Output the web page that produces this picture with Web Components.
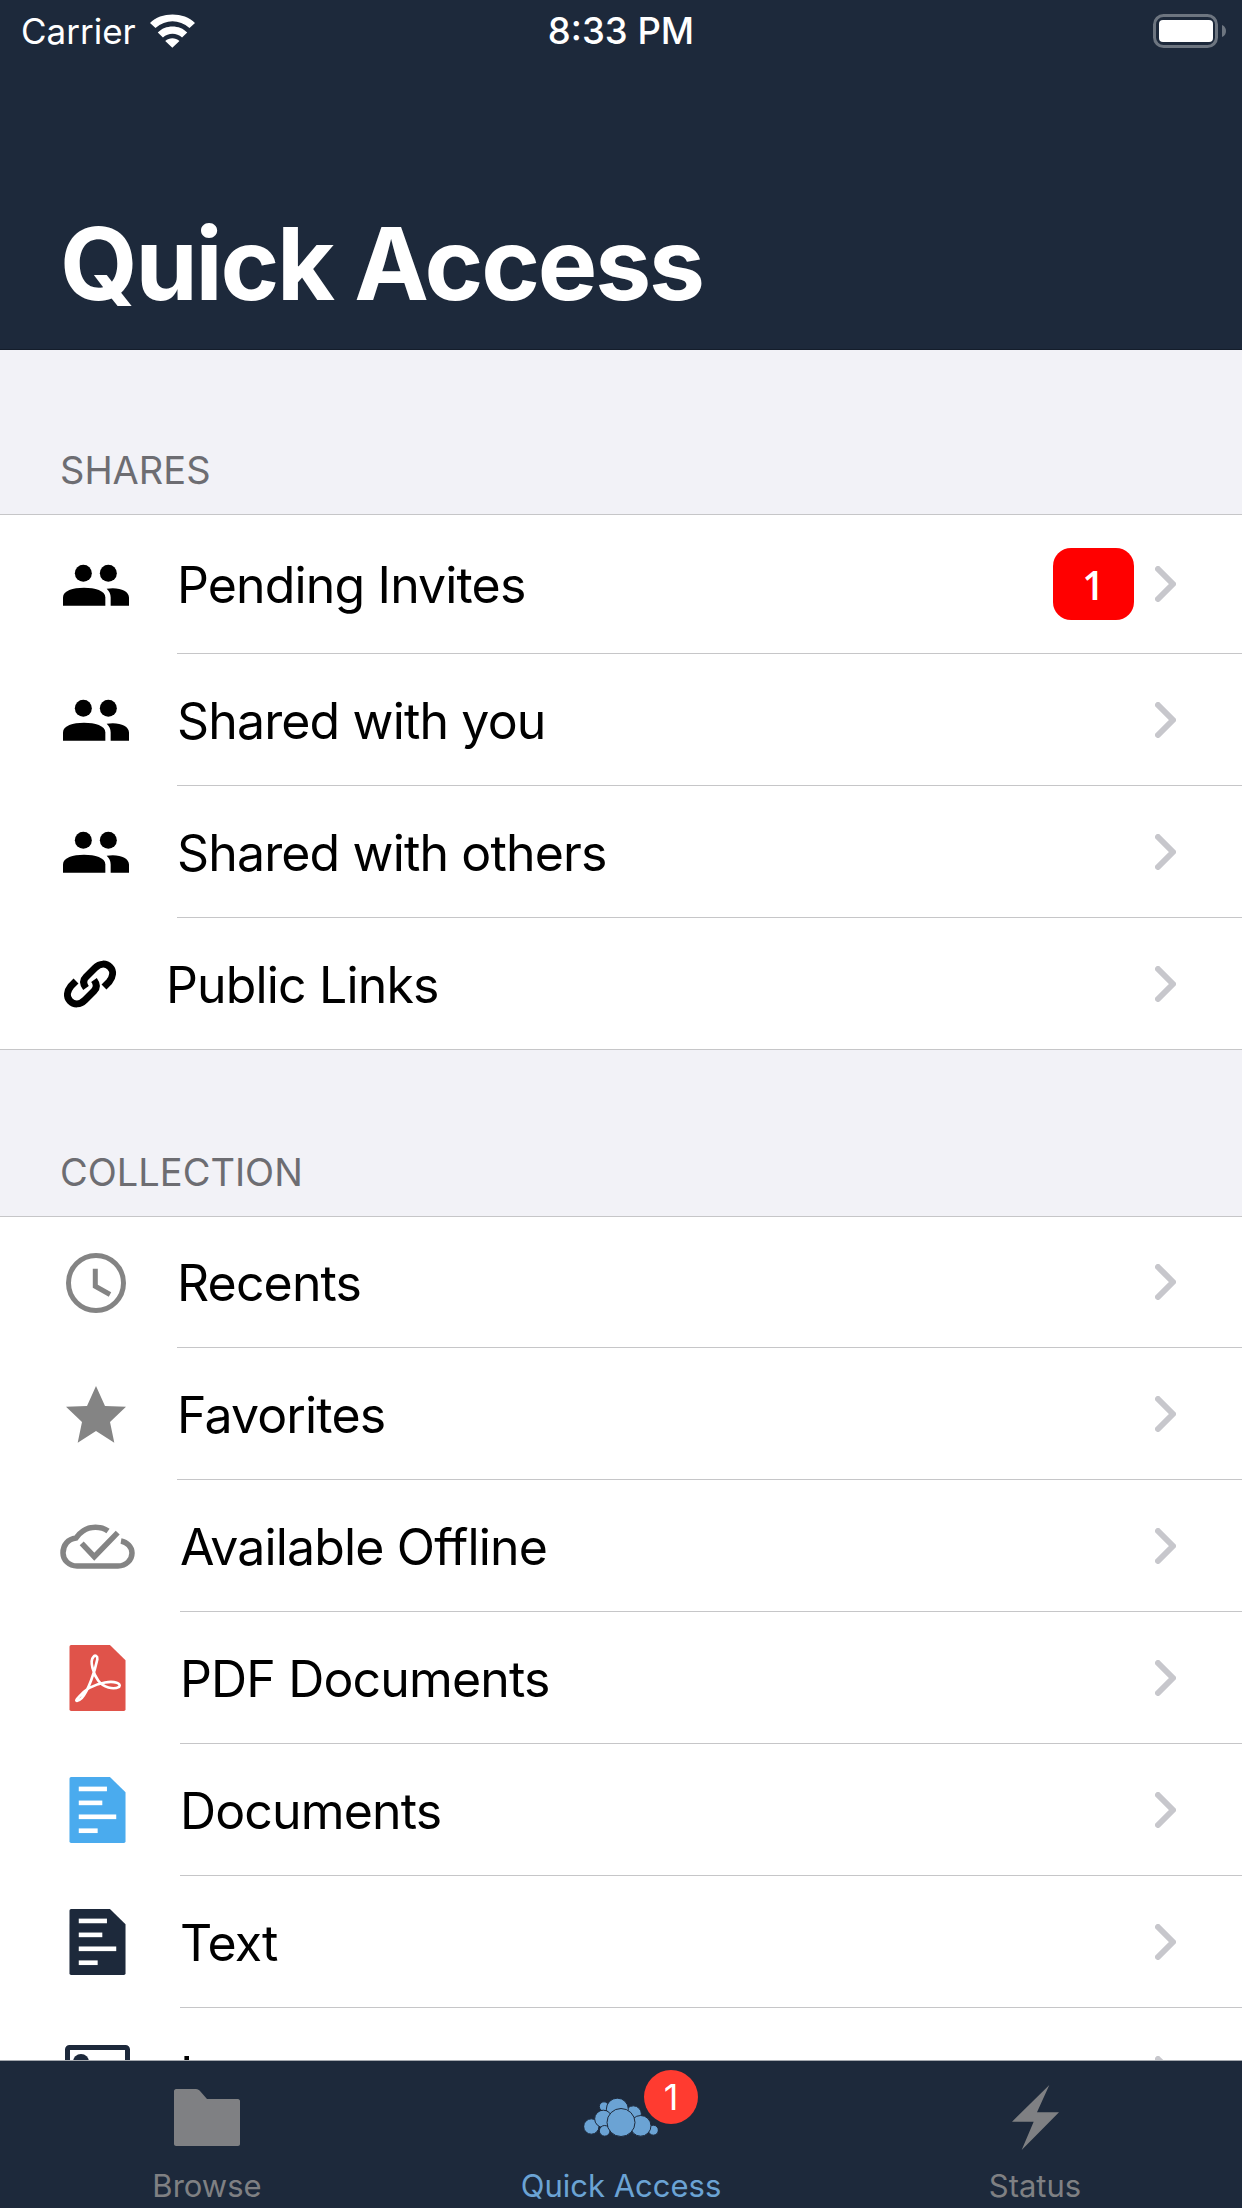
<!DOCTYPE html>
<html>
<head>
<meta charset="utf-8">
<title>Quick Access</title>
<style>
  html, body { margin: 0; padding: 0; background: #f2f2f7; }
  body { font-family: Inter, "Noto Sans", sans-serif; }
</style>
</head>
<body>
<oc-app>
  <oc-header slot="header" title="Quick Access"></oc-header>

  <oc-section title="SHARES" head="164">
    <oc-row icon="people" inset="177" height="139" badge="1">Pending Invites</oc-row>
    <oc-row icon="people" inset="177">Shared with you</oc-row>
    <oc-row icon="people" inset="177">Shared with others</oc-row>
    <oc-row icon="link" inset="166" height="131" last>Public Links</oc-row>
  </oc-section>

  <oc-section title="COLLECTION" head="166">
    <oc-row icon="clock" inset="177" height="131">Recents</oc-row>
    <oc-row icon="star" inset="177">Favorites</oc-row>
    <oc-row icon="offline" inset="180">Available Offline</oc-row>
    <oc-row icon="pdf" inset="180">PDF Documents</oc-row>
    <oc-row icon="doc" inset="180">Documents</oc-row>
    <oc-row icon="text" inset="180">Text</oc-row>
    <oc-row icon="image" inset="180">Images</oc-row>
  </oc-section>

  <oc-tabbar slot="tabs">
    <oc-tab icon="folder">Browse</oc-tab>
    <oc-tab icon="cloud" active badge="1">Quick Access</oc-tab>
    <oc-tab icon="bolt">Status</oc-tab>
  </oc-tabbar>
</oc-app>

<script>
const docLines = '<rect x="28" y="29" width="85" height="14"/><rect x="28" y="71" width="71" height="14"/><rect x="28" y="113" width="113" height="14"/><rect x="28" y="155" width="57" height="14"/>';
const filePath = 'M5 0H122L169 46V194a5 5 0 0 1-5 5H5a5 5 0 0 1-5-5V5a5 5 0 0 1 5-5Z';

const ICONS = {
  people: `<svg width="66" height="42" viewBox="0 0 198 125"><circle cx="61" cy="27" r="25.500"/><circle cx="136" cy="27" r="25.500"/><path d="M0 125V100C0 80 30 71 63 71S127 80 127 100V125Z"/><path d="M143 125V100C143 90 139 82 131 74C167 68 198 80 198 100V125Z"/></svg>`,
  link: `<svg width="54" height="54" viewBox="0 0 54 54" fill="none" stroke="#000" stroke-width="7"><path d="M23 31C20 27 20 23 23 20L32 11C37 6 43 6 47 10C51 14 50 20 46 25L41 30"/><path d="M31 23C34 27 34 31 31 34L22 43C17 48 11 48 7 44C3 40 4 34 8 29L13 24"/></svg>`,
  clock: `<svg width="60" height="60" viewBox="0 0 60 60" fill="none" stroke="#848484" stroke-width="5"><circle cx="30" cy="30" r="27.500"/><path d="M29.300 15.700V33.300L44 41.500"/></svg>`,
  star: `<svg width="60" height="57" viewBox="0 0 60 57"><path fill="#848484" d="M30 0L39 20L60 20.700L44 36L48.300 56.700L30 45L11.700 56.700L16 36L0 20.700L21 20Z"/></svg>`,
  offline: `<svg width="75" height="45" viewBox="0 0 75 45" fill="none" stroke="#848484" stroke-width="5.500"><path d="M48 7C41 2 30 2 23 7C20 9 18 11 16 14C8 15 3 21 3 29C3 36 9 42 17 42H58C66 42 72 36 72 29C72 23 67 18 61 17"/><path d="M21.700 19.300L34.300 32.700L57.700 8.700"/></svg>`,
  pdf: `<svg width="57" height="66" viewBox="0 0 169 199"><path fill="#e0534a" d="${filePath}"/><path fill="none" stroke="#fff" stroke-width="8" d="M72 36C60 48 72 88 87 108C102 128 132 136 150 126C157 116 137 108 107 113C77 118 47 133 27 158C12 173 27 170 37 160C57 138 77 78 84 43C85 33 77 28 72 36Z"/></svg>`,
  doc: `<svg width="57" height="66" viewBox="0 0 169 199"><path fill="#4aabee" d="${filePath}"/><g fill="#fff">${docLines}</g></svg>`,
  text: `<svg width="57" height="66" viewBox="0 0 169 199"><path fill="#1d293b" d="${filePath}"/><g fill="#fff">${docLines}</g></svg>`,
  image: `<svg width="65" height="58" viewBox="0 0 65 58"><rect x="2.500" y="2.500" width="60" height="53" rx="2" fill="none" stroke="#1d293b" stroke-width="5"/><circle cx="16" cy="17" r="8" fill="#1d293b"/></svg>`,
  folder: `<svg width="66" height="57" viewBox="0 0 66 57"><path fill="#7f8083" d="M2 0H22C24 0 25 1 26 2L33 10H64C65 10 66 11 66 12V55C66 56 65 57 64 57H2C1 57 0 56 0 55V2C0 1 1 0 2 0Z"/></svg>`,
  bolt: `<svg width="47" height="65" viewBox="153 75 141 195"><path fill="#7f8083" d="M265 75L153 185H218L182 270L294 157H228Z"/></svg>`,
  cloud: `<svg width="74" height="39" viewBox="190 145 222 116" fill="#6ba3d4" stroke="#1d293b" stroke-width="3"><circle cx="250" cy="170" r="14"/><circle cx="338" cy="192" r="24"/><circle cx="290" cy="178" r="33"/><circle cx="398" cy="241" r="15"/><circle cx="212" cy="230" r="23"/><circle cx="248" cy="207" r="26"/><circle cx="360" cy="228" r="31"/><circle cx="252" cy="243" r="16"/><circle cx="301" cy="218" r="42"/></svg>`
};

customElements.define('oc-app', class extends HTMLElement {
  constructor() {
    super();
    const root = this.attachShadow({ mode: 'open' });
    root.innerHTML = `
      <style>
        :host { display: flex; flex-direction: column; width: 1242px; height: 2208px; overflow: hidden; }
        main { flex: 1; min-height: 0; overflow: hidden; }
      </style>
      <slot name="header"></slot>
      <main><slot></slot></main>
      <slot name="tabs"></slot>
    `;
  }
});

customElements.define('oc-header', class extends HTMLElement {
  constructor() {
    super();
    const root = this.attachShadow({ mode: 'open' });
    root.innerHTML = `
      <style>
        :host { display: block; height: 350px; box-sizing: border-box; background: #1d293b; color: #fff; border-bottom: 1px solid #141d2b; }
        .status { display: grid; grid-template-columns: 1fr auto 1fr; align-items: center; height: 62px; padding: 0 15px; font-size: 35px; }
        .left { display: flex; align-items: center; gap: 14px; padding-left: 6px; }
        .right { justify-self: end; display: flex; align-items: center; }
        .time { font-size: 36.500px; font-weight: 500; }
        h1 { margin: 0; padding: 145px 0 0 60px; font-size: 100px; line-height: 114px; font-weight: 700; letter-spacing: -2.200px; }
      </style>
      <div class="status">
        <div class="left">
          <span>Carrier</span>
          <svg width="45" height="34" viewBox="28 20 139 104"><path fill="#fff" d="M28 47C62 12 133 12 167 47L150 63C118 35 77 35 45 63ZM52 77C75 52 120 52 143 77L127 92C110 77 85 77 68 92ZM75 103C88 92 106 92 119 103L97 124Z"/></svg>
        </div>
        <span class="time">8:33 PM</span>
        <div class="right">
          <svg width="74" height="34" viewBox="0 0 74 34"><rect x="1.500" y="1.500" width="62" height="31" rx="9" fill="none" stroke="#6d7580" stroke-width="3"/><rect x="6" y="6" width="54" height="22" rx="4" fill="#fff"/><path d="M69 11C72 12 73 15 73 17S72 22 69 23Z" fill="#6d7580"/></svg>
        </div>
      </div>
      <h1></h1>
    `;
    root.querySelector('h1').textContent = this.getAttribute('title');
  }
});

customElements.define('oc-section', class extends HTMLElement {
  constructor() {
    super();
    const root = this.attachShadow({ mode: 'open' });
    root.innerHTML = `
      <style>
        :host { display: block; }
        .head { display: flex; align-items: flex-end; box-sizing: border-box; padding: 0 0 22px 60px; font-size: 38px; line-height: 44px; color: #6d6d72; }
        .rows { background: #fff; border-top: 1px solid #c6c6c8; border-bottom: 1px solid #c6c6c8; }
      </style>
      <div class="head"></div>
      <div class="rows"><slot></slot></div>
    `;
    const head = root.querySelector('.head');
    head.textContent = this.getAttribute('title');
    head.style.height = (this.getAttribute('head') || 164) + 'px';
  }
});

customElements.define('oc-row', class extends HTMLElement {
  constructor() {
    super();
    const root = this.attachShadow({ mode: 'open' });
    root.innerHTML = `
      <style>
        :host { display: flex; align-items: stretch; box-sizing: border-box; height: 132px; background: #fff; color: #000; font-size: 50px; letter-spacing: -0.850px; }
        .icon { display: flex; align-items: center; justify-content: center; flex: none; box-sizing: border-box; }
        .body { flex: 1; display: flex; align-items: center; min-width: 0; box-sizing: border-box; border-bottom: 1px solid #c6c6c8; padding-right: 66px; }
        :host([last]) .body { border-bottom: 0; }
        .label { flex: 1; padding-top: 2px; }
        .badge { display: flex; align-items: center; justify-content: center; width: 81px; height: 72px; margin-right: 21px; border-radius: 18px; background: #f00; color: #fff; font: 600 39px "Open Sans", sans-serif; letter-spacing: 0; }
        .chevron { flex: none; }
        svg { display: block; }
      </style>
      <div class="icon"></div>
      <div class="body">
        <div class="label"><slot></slot></div>
        <div class="badge"></div>
        <svg class="chevron" width="21" height="36" viewBox="0 0 21 36" fill="none" stroke="#c7c7cc" stroke-width="6" stroke-linecap="round" stroke-linejoin="round"><path d="M3 3L18 18L3 33"/></svg>
      </div>
    `;
    const inset = Number(this.getAttribute('inset') || 177);
    const icon = root.querySelector('.icon');
    const name = this.getAttribute('icon');
    icon.innerHTML = ICONS[name] || '';
    const centre = { people: 96, link: 90, clock: 96, star: 96, offline: 97, pdf: 97, doc: 97, text: 97, image: 97 }[name] || 96;
    icon.style.width = (centre * 2) + 'px';
    icon.style.marginRight = (inset - centre * 2) + 'px';
    const h = this.getAttribute('height');
    if (h) this.style.height = h + 'px';
    const badge = root.querySelector('.badge');
    if (this.hasAttribute('badge')) {
      badge.textContent = this.getAttribute('badge');
    } else {
      badge.remove();
    }
  }
});

customElements.define('oc-tabbar', class extends HTMLElement {
  constructor() {
    super();
    const root = this.attachShadow({ mode: 'open' });
    root.innerHTML = `
      <style>
        :host { display: grid; grid-template-columns: repeat(3, 1fr); box-sizing: border-box; height: 148px; background: #1d293b; border-top: 1px solid #a4a8ae; }
      </style>
      <slot></slot>
    `;
  }
});

customElements.define('oc-tab', class extends HTMLElement {
  constructor() {
    super();
    const root = this.attachShadow({ mode: 'open' });
    root.innerHTML = `
      <style>
        :host { display: flex; flex-direction: column; align-items: center; padding-top: 24px; color: #7f8083; font-size: 31px; line-height: 36px; }
        :host([active]) { color: #6ba3d4; }
        .art { position: relative; display: flex; align-items: center; justify-content: center; height: 65px; margin-bottom: 18px; }
        .dot { position: absolute; left: 60px; top: -15px; width: 54px; height: 54px; border-radius: 50%; background: #ff3b30; color: #fff; font-size: 36px; line-height: 54px; text-align: center; }
        svg { display: block; }
      </style>
      <div class="art"></div>
      <div><slot></slot></div>
    `;
    const art = root.querySelector('.art');
    art.innerHTML = ICONS[this.getAttribute('icon')] || '';
    if (this.hasAttribute('badge')) {
      const dot = document.createElement('div');
      dot.className = 'dot';
      dot.textContent = this.getAttribute('badge');
      art.appendChild(dot);
    }
  }
});
</script>
</body>
</html>
